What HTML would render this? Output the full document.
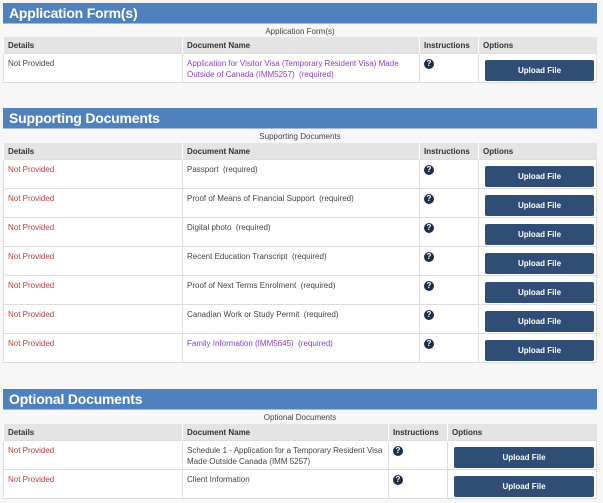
<!DOCTYPE html>
<html><head><style>
body{margin:0;background:#f7f7f7;font-family:"Liberation Sans",sans-serif;width:603px;height:503px;overflow:hidden;position:relative}
.h{position:absolute;left:3px;width:594px;height:21px;background:#4f81bd;color:#fff;font-weight:bold;font-size:14px;line-height:21px;padding-left:6px;box-sizing:border-box;border-bottom:1px solid #9fbbe0;letter-spacing:-0.2px}
.cap{position:absolute;left:3px;width:594px;text-align:center;font-size:8px;color:#444}
table{position:absolute;left:3px;width:594px;border-collapse:collapse;font-size:8px;table-layout:fixed;color:#444}
th{background:#e4e4e4;text-align:left;height:16px;padding:0 4px;font-weight:bold;border-left:1px solid #fff;color:#333}
td{background:#fff;height:29px;vertical-align:top;padding:4px 4px 0;border:1px solid #ddd;box-sizing:border-box;line-height:11px}
.r{color:#b04040}.p{color:#8a3fc8}
.q{display:inline-block;width:10px;height:10px;border-radius:50%;background:#1c2f4a;color:#fff;font-size:8px;font-weight:bold;text-align:center;line-height:10px;margin-top:-1px}
.b{display:block;background:#2f4d75;color:#fff;font-weight:bold;text-align:center;height:21px;line-height:21px;border-radius:2px;margin:2px -2px 0 2px}
</style></head><body>
<div class="h" style="top:3px">Application Form(s)</div>
<div class="cap" style="top:27px">Application Form(s)</div>
<table style="top:37px"><colgroup><col style="width:179px"><col style="width:237px"><col style="width:59px"><col></colgroup>
<tr><th>Details</th><th>Document Name</th><th>Instructions</th><th>Options</th></tr>
<tr><td>Not Provided</td><td class="p">Application for Visitor Visa (Temporary Resident Visa) Made Outside of Canada (IMM5257) &nbsp;(required)</td><td><span class="q">?</span></td><td><span class="b">Upload File</span></td></tr>
</table>

<div class="h" style="top:108px">Supporting Documents</div>
<div class="cap" style="top:132px">Supporting Documents</div>
<table style="top:143px"><colgroup><col style="width:179px"><col style="width:237px"><col style="width:59px"><col></colgroup>
<tr><th>Details</th><th>Document Name</th><th>Instructions</th><th>Options</th></tr>
<tr><td class="r">Not Provided</td><td>Passport &nbsp;(required)</td><td><span class="q">?</span></td><td><span class="b">Upload File</span></td></tr>
<tr><td class="r">Not Provided</td><td>Proof of Means of Financial Support &nbsp;(required)</td><td><span class="q">?</span></td><td><span class="b">Upload File</span></td></tr>
<tr><td class="r">Not Provided</td><td>Digital photo &nbsp;(required)</td><td><span class="q">?</span></td><td><span class="b">Upload File</span></td></tr>
<tr><td class="r">Not Provided</td><td>Recent Education Transcript &nbsp;(required)</td><td><span class="q">?</span></td><td><span class="b">Upload File</span></td></tr>
<tr><td class="r">Not Provided</td><td>Proof of Next Terms Enrolment &nbsp;(required)</td><td><span class="q">?</span></td><td><span class="b">Upload File</span></td></tr>
<tr><td class="r">Not Provided</td><td>Canadian Work or Study Permit &nbsp;(required)</td><td><span class="q">?</span></td><td><span class="b">Upload File</span></td></tr>
<tr><td class="r">Not Provided</td><td class="p">Family Information (IMM5645) &nbsp;(required)</td><td><span class="q">?</span></td><td><span class="b">Upload File</span></td></tr>
</table>

<div class="h" style="top:389px">Optional Documents</div>
<div class="cap" style="top:413px">Optional Documents</div>
<table style="top:424px"><colgroup><col style="width:179px"><col style="width:206px"><col style="width:59px"><col></colgroup>
<tr><th>Details</th><th>Document Name</th><th>Instructions</th><th>Options</th></tr>
<tr><td class="r">Not Provided</td><td>Schedule 1 - Application for a Temporary Resident Visa Made Outside Canada (IMM 5257)</td><td><span class="q">?</span></td><td><span class="b">Upload File</span></td></tr>
<tr><td class="r">Not Provided</td><td>Client Information</td><td><span class="q">?</span></td><td><span class="b">Upload File</span></td></tr>
</table>
</body></html>
